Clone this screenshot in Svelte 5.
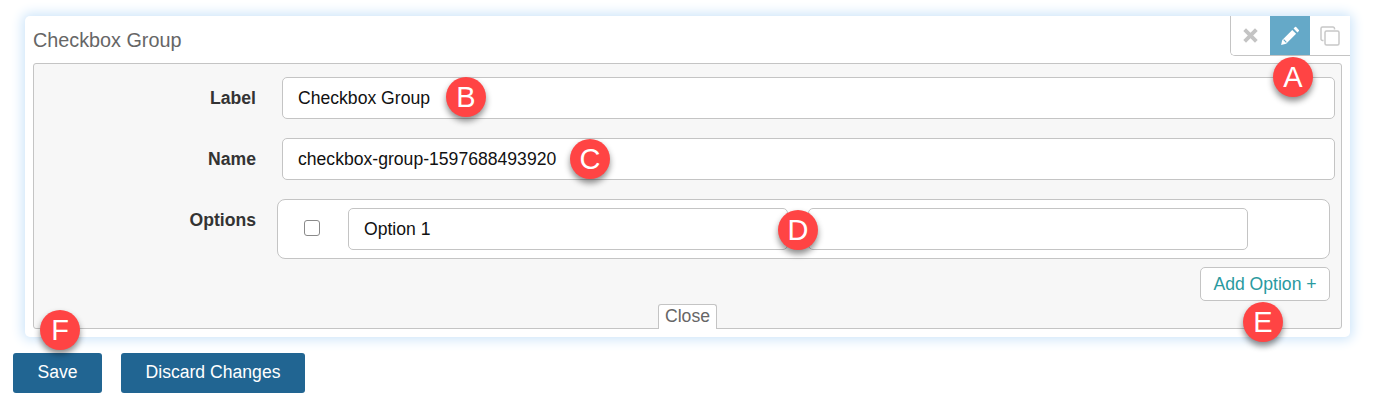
<script>
  // annotation markers lying over the form
  const badges = [
    { letter: 'A', x: 1273, y: 57 },
    { letter: 'B', x: 446, y: 77 },
    { letter: 'C', x: 570, y: 139 },
    { letter: 'D', x: 778, y: 210 },
    { letter: 'E', x: 1243, y: 302 },
    { letter: 'F', x: 40, y: 310 }
  ];
</script>

<div class="page">
  <div class="card">
    <div class="head">
      <span class="title">Checkbox Group</span>
      <div class="actions">
        <button class="act first">
          <svg width="17" height="17" viewBox="0 0 16 16"><path d="M2.500 2.500l11 11M13.500 2.500l-11 11" stroke="#c4c4c4" stroke-width="3.600" fill="none" /></svg>
        </button>
        <button class="act edit">
          <svg width="20" height="20" viewBox="0 0 18 18">
            <path fill="#fff" d="M11 3.500L14.500 7l-9 9L1 17l1-4.500z" />
            <path fill="#fff" d="M12.200 2.300l1.300-1.300q.5-.5 1 0l2.500 2.500q.5.5 0 1l-1.300 1.300z" />
            <path d="M3.300 12.300l2.400 2.400" stroke="#65a9c8" stroke-width="1" fill="none" />
          </svg>
        </button>
        <button class="act">
          <svg width="22" height="22" viewBox="0 0 22 22" fill="none" stroke="#c8c8c8" stroke-width="1.500"><path d="M4.500 15.500h-1a1.500 1.500 0 0 1-1.500-1.500V3.500A1.500 1.500 0 0 1 3.500 2H14a1.500 1.500 0 0 1 1.500 1.500v1" /><rect x="6" y="6" width="14" height="14" rx="1.500" /></svg>
        </button>
      </div>
    </div>

    <div class="panel">
      <div class="row">
        <span class="label">Label</span>
        <input class="text" value="Checkbox Group" />
      </div>
      <div class="row">
        <span class="label">Name</span>
        <input class="text" value="checkbox-group-1597688493920" />
      </div>
      <div class="row options-row">
        <span class="label">Options</span>
        <div class="options">
          <input type="checkbox" class="check" />
          <input class="text" value="Option 1" />
          <input class="text" />
        </div>
      </div>
      <div class="add-row">
        <button class="add">Add Option +</button>
      </div>
      <span class="close">Close</span>
    </div>
  </div>

  <div class="footer">
    <button class="primary save">Save</button>
    <button class="primary">Discard Changes</button>
  </div>

  {#each badges as b}
    <div class="badge" style="left: {b.x}px; top: {b.y}px">{b.letter}</div>
  {/each}
</div>

<style>
  :global(body) {
    background: #fff;
  }
  .page {
    position: relative;
    width: 1379px;
    height: 414px;
    padding: 16px 0 0 13px;
    box-sizing: border-box;
    overflow: hidden;
    font-family: "Liberation Sans", Arial, sans-serif;
    font-size: 17.6px;
    color: #333;
  }
  .card {
    width: 1325px;
    height: 321px;
    margin-left: 12px;
    box-sizing: border-box;
    padding: 0 8px;
    background: #fff;
    border-radius: 5px;
    box-shadow: 0 0 12px 3px #cfe6fa;
  }
  .head {
    display: flex;
    justify-content: space-between;
    height: 47px;
    margin-right: -8px;
  }
  .title {
    font-size: 19.8px;
    color: #666;
    line-height: 48px;
  }
  .actions {
    display: flex;
    height: 40px;
    box-sizing: border-box;
    border: 1px solid #c4c4c4;
    border-width: 0 0 1px 1px;
    border-bottom-left-radius: 5px;
    overflow: hidden;
  }
  .act {
    display: flex;
    align-items: center;
    justify-content: center;
    width: 40px;
    padding: 0;
    border: 0;
    background: #fff;
  }
  .first {
    width: 39px;
  }
  .edit {
    background: #65a9c8;
  }
  .panel {
    position: relative;
    height: 266px;
    box-sizing: border-box;
    padding: 13px 6px 0 0;
    background: #f7f7f7;
    border: 1px solid #c4c4c4;
    border-radius: 3px;
  }
  .row {
    display: flex;
    align-items: center;
    gap: 26px;
    margin-bottom: 19px;
  }
  .label {
    flex: 0 0 222px;
    text-align: right;
    font-weight: bold;
  }
  .text {
    flex: 1;
    min-width: 0;
    height: 42px;
    box-sizing: border-box;
    padding: 0 15px;
    background: #fff;
    border: 1px solid #c4c4c4;
    border-radius: 5px;
    outline: 0;
    font: inherit;
    color: #111;
  }
  .options-row {
    align-items: flex-start;
    gap: 21px;
    margin: 0 0 8px;
  }
  .options-row .label {
    padding-top: 11px;
  }
  .options {
    flex: 1;
    display: flex;
    align-items: center;
    gap: 20px;
    height: 60px;
    box-sizing: border-box;
    margin-right: 5px;
    padding: 0 81px 0 26px;
    background: #fff;
    border: 1px solid #c4c4c4;
    border-radius: 8px;
  }
  .options .text {
    flex: 0 0 440px;
  }
  .check {
    appearance: none;
    width: 16px;
    height: 16px;
    margin: 0 8px 2px 0;
    background: #fff;
    border: 1px solid #8a8a8a;
    border-radius: 3px;
  }
  .add-row {
    display: flex;
    justify-content: flex-end;
    margin-right: 5px;
  }
  .add {
    width: 130px;
    height: 34px;
    padding: 0;
    background: #fff;
    border: 1px solid #c4c4c4;
    border-radius: 5px;
    font: inherit;
    color: #2a9a9f;
  }
  .close {
    position: absolute;
    left: 624px;
    bottom: -1px;
    width: 59px;
    height: 25px;
    box-sizing: border-box;
    background: #fff;
    border: 1px solid #c4c4c4;
    border-bottom: 0;
    border-radius: 3px 3px 0 0;
    text-align: center;
    line-height: 23px;
    color: #666;
  }
  .footer {
    display: flex;
    gap: 19px;
    margin-top: 16px;
  }
  .primary {
    width: 184px;
    height: 40px;
    padding: 0 0 2px;
    background: #216592;
    border: 0;
    border-radius: 3px;
    font: inherit;
    color: #fff;
  }
  .save {
    width: 89px;
  }
  .badge {
    position: absolute;
    width: 40px;
    height: 40px;
    border-radius: 50%;
    background: #ff4444;
    box-shadow: 0 4px 6px rgba(0, 0, 0, 0.45);
    color: #fff;
    font-size: 29px;
    line-height: 40px;
    text-align: center;
  }
</style>
